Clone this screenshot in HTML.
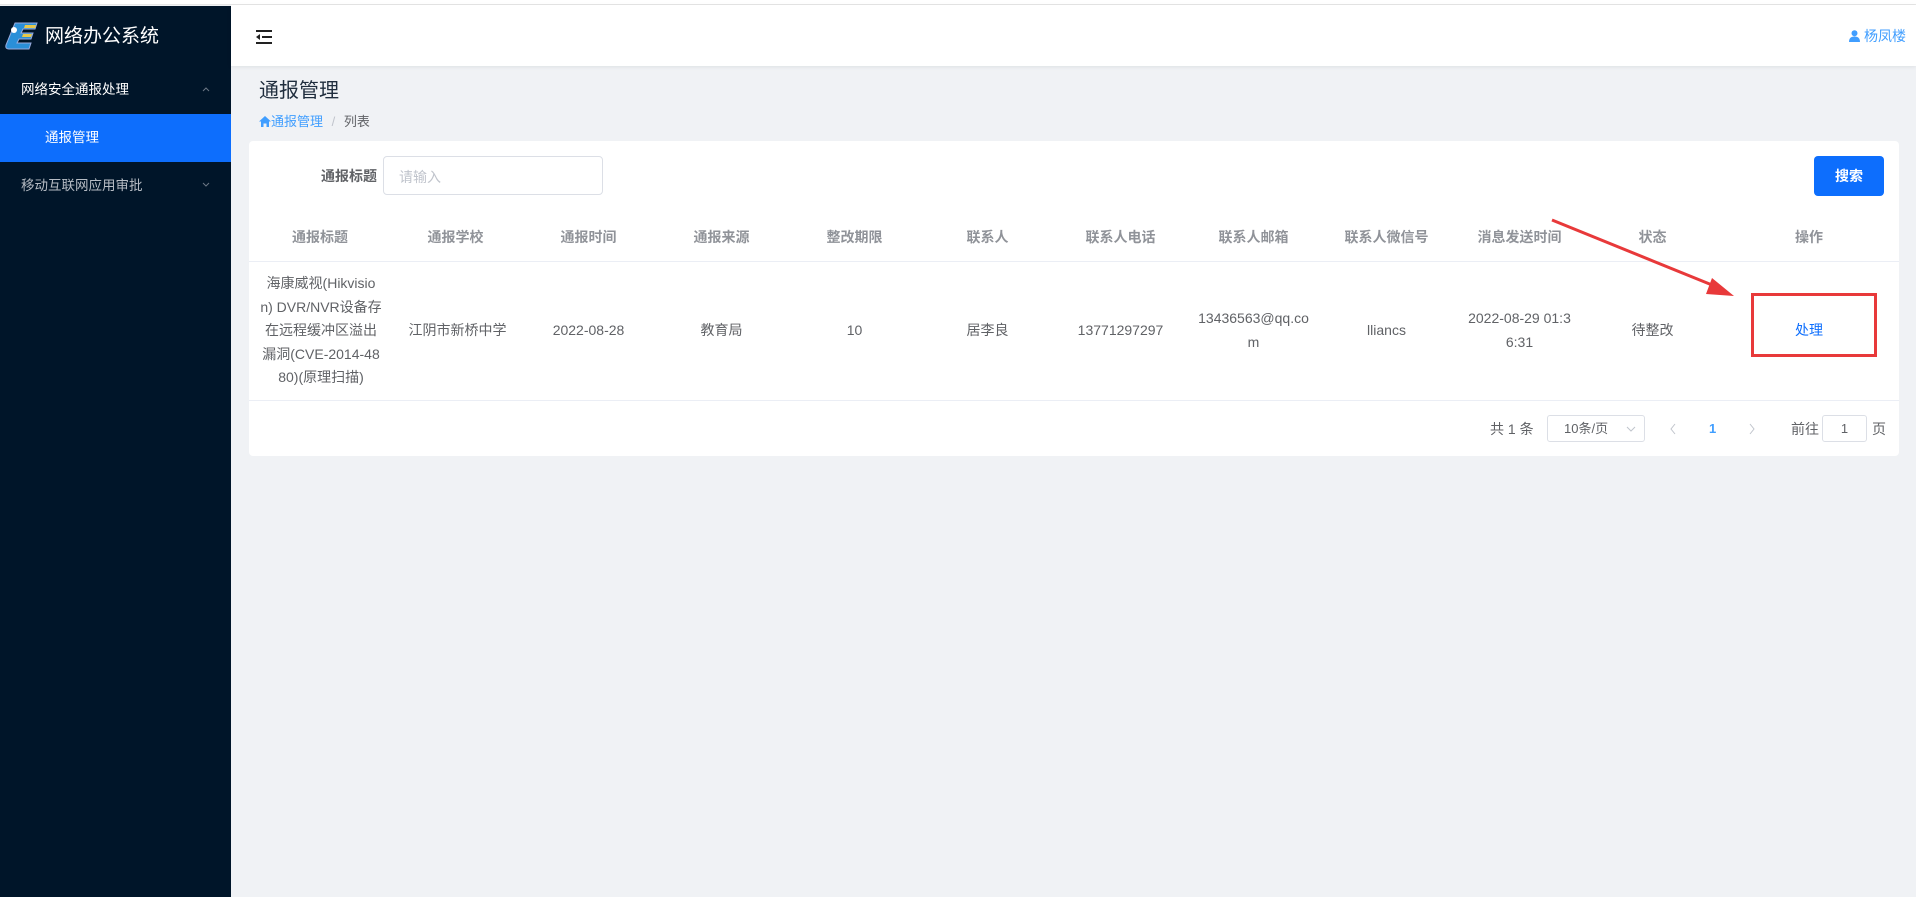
<!DOCTYPE html>
<html><head><meta charset="utf-8"><style>
*{margin:0;padding:0;box-sizing:border-box}
body{width:1916px;height:897px;overflow:hidden;background:#f0f2f5;font-family:"Liberation Sans","Noto Sans CJK SC",sans-serif;position:relative;color:#606266}
.abs{position:absolute}
.top{left:0;top:0;width:1916px;height:5px;background:#fff;border-bottom:1px solid #e6e6e6}
.side{left:0;top:6px;width:231px;height:891px;background:#001529}
.hdr{left:231px;top:5px;width:1685px;height:61px;background:#fff;box-shadow:0 1px 4px rgba(0,21,41,.08)}
.card{left:249px;top:141px;width:1650px;height:315px;background:#fff;border-radius:4px}
.th{top:227px;font-size:14px;font-weight:bold;color:#909399;text-align:center;line-height:20px}
.td{font-size:14px;color:#606266;text-align:center;line-height:23.5px;white-space:nowrap}
</style></head><body>
<div class="abs top"></div>
<div class="abs side">
  <svg class="abs" style="left:3px;top:15px" width="38" height="34" viewBox="0 0 38 34">
    <path d="M12 2 L34 2 L32 8 L20 8 L18 12 L30 12 L28 18 L16 18 L14 22 L28 22 L26 28 L6 28 Q2 28 3 24 Z" fill="#2a8fd8" stroke="#9ad" stroke-width="1"/>
    <path d="M22 4 L33 4 L32 7 L21 7Z M20 13 L29 13 L28 16 L19 16Z" fill="#e8c84a"/>
    <circle cx="11" cy="9" r="3" fill="#fff"/>
  </svg>
  <div class="abs" style="left:45px;top:19px;font-size:19px;color:#fff;line-height:24px">网络办公系统</div>
  <div class="abs" style="left:21px;top:74px;font-size:13.5px;color:#fff;line-height:20px">网络安全通报处理</div>
  <svg class="abs" style="left:200px;top:79px" width="12" height="10"><path d="M3 6 L6 3 L9 6" fill="none" stroke="#6b7785" stroke-width="1"/></svg>
  <div class="abs" style="left:0;top:108px;width:231px;height:48px;background:#0d6efd"></div>
  <div class="abs" style="left:45px;top:122px;font-size:13.5px;color:#fff;line-height:20px">通报管理</div>
  <div class="abs" style="left:21px;top:170px;font-size:13.5px;color:#b6bcc4;line-height:20px">移动互联网应用审批</div>
  <svg class="abs" style="left:200px;top:174px" width="12" height="10"><path d="M3 3 L6 6 L9 3" fill="none" stroke="#6b7785" stroke-width="1"/></svg>
</div>
<div class="abs hdr">
  <svg class="abs" style="left:23px;top:24px" width="20" height="16"><path d="M2 2H18M8 8H18M2 14H18" stroke="#222" stroke-width="2"/><path d="M6 5 L2 8 L6 11Z" fill="#222"/></svg>
  <div class="abs" style="right:10px;top:21px;font-size:14px;color:#409eff;line-height:20px"><svg width="11" height="12" viewBox="0 0 11 12" style="vertical-align:-1px"><circle cx="5.5" cy="3.2" r="3" fill="#409eff"/><path d="M0 12 Q0 6.5 5.5 6.5 Q11 6.5 11 12Z" fill="#409eff"/></svg> 杨凤楼</div>
</div>
<div class="abs" style="left:259px;top:79px;font-size:20px;color:#1f2d3d;line-height:24px">通报管理</div>
<div class="abs" style="left:259px;top:113px;font-size:13px;line-height:18px;color:#409eff"><svg width="12" height="11" viewBox="0 0 12 11" style="vertical-align:-1px"><path d="M6 0 L12 5.5 H10 V11 H7.5 V7.5 H4.5 V11 H2 V5.5 H0Z" fill="#409eff"/></svg>通报管理 <span style="color:#c0c4cc;margin:0 5px">/</span> <span style="color:#606266">列表</span></div>
<div class="abs card"></div>
<div class="abs" style="left:321px;top:166px;font-size:14px;font-weight:bold;color:#606266;line-height:20px">通报标题</div>
<div class="abs" style="left:383px;top:156px;width:220px;height:39px;border:1px solid #dcdfe6;border-radius:4px;background:#fff"><span class="abs" style="left:15px;top:10px;font-size:14px;color:#c0c4cc">请输入</span></div>
<div class="abs" style="left:1814px;top:156px;width:70px;height:40px;background:#0d6efd;border-radius:4px;color:#fff;font-size:14px;font-weight:bold;text-align:center;line-height:40px">搜索</div>

<div class="abs th" style="left:248px;width:144px">通报标题</div>
<div class="abs th" style="left:389px;width:133px">通报学校</div>
<div class="abs th" style="left:522px;width:133px">通报时间</div>
<div class="abs th" style="left:655px;width:133px">通报来源</div>
<div class="abs th" style="left:788px;width:133px">整改期限</div>
<div class="abs th" style="left:921px;width:133px">联系人</div>
<div class="abs th" style="left:1054px;width:133px">联系人电话</div>
<div class="abs th" style="left:1187px;width:133px">联系人邮箱</div>
<div class="abs th" style="left:1320px;width:133px">联系人微信号</div>
<div class="abs th" style="left:1453px;width:133px">消息发送时间</div>
<div class="abs th" style="left:1586px;width:133px">状态</div>
<div class="abs th" style="left:1721px;width:176px">操作</div>
<div class="abs" style="left:249px;top:261px;width:1650px;height:1px;background:#ebeef5"></div>
<div class="abs" style="left:249px;top:400px;width:1650px;height:1px;background:#ebeef5"></div>

<div class="abs td" style="left:249px;top:272px;width:144px">海康威视(Hikvisio<br>n) DVR/NVR设备存<br>在远程缓冲区溢出<br>漏洞(CVE-2014-48<br>80)(原理扫描)</div>
<div class="abs td" style="left:391px;top:319px;width:133px">江阴市新桥中学</div>
<div class="abs td" style="left:522px;top:319px;width:133px">2022-08-28</div>
<div class="abs td" style="left:655px;top:319px;width:133px">教育局</div>
<div class="abs td" style="left:788px;top:319px;width:133px">10</div>
<div class="abs td" style="left:921px;top:319px;width:133px">居李良</div>
<div class="abs td" style="left:1054px;top:319px;width:133px">13771297297</div>
<div class="abs td" style="left:1187px;top:307px;width:133px">13436563@qq.co<br>m</div>
<div class="abs td" style="left:1320px;top:319px;width:133px">lliancs</div>
<div class="abs td" style="left:1453px;top:307px;width:133px">2022-08-29 01:3<br>6:31</div>
<div class="abs td" style="left:1586px;top:319px;width:133px">待整改</div>
<div class="abs td" style="left:1721px;top:319px;width:176px;color:#0d6efd">处理</div>
<div class="abs" style="left:1751px;top:293px;width:126px;height:64px;border:3px solid #e8393a"></div>
<svg class="abs" style="left:0;top:0" width="1916" height="897"><path d="M1552 220 L1717 287" stroke="#e8393a" stroke-width="3"/><path d="M1734 296 L1712 278 L1706 294Z" fill="#e8393a"/></svg>

<div class="abs" style="left:1490px;top:419px;font-size:14px;line-height:20px">共 1 条</div>
<div class="abs" style="left:1547px;top:415px;width:98px;height:27px;border:1px solid #dcdfe6;border-radius:3px;font-size:13px;line-height:25px;padding-left:16px">10条/页<svg class="abs" style="right:8px;top:9px" width="10" height="8"><path d="M1 2 L5 6 L9 2" fill="none" stroke="#c0c4cc"/></svg></div>
<svg class="abs" style="left:1668px;top:422px" width="10" height="14"><path d="M7 2 L3 7 L7 12" fill="none" stroke="#c0c4cc"/></svg>
<div class="abs" style="left:1709px;top:419px;font-size:13px;color:#409eff;font-weight:bold;line-height:20px">1</div>
<svg class="abs" style="left:1747px;top:422px" width="10" height="14"><path d="M3 2 L7 7 L3 12" fill="none" stroke="#c0c4cc"/></svg>
<div class="abs" style="left:1791px;top:419px;font-size:14px;line-height:20px">前往</div>
<div class="abs" style="left:1822px;top:415px;width:45px;height:27px;border:1px solid #dcdfe6;border-radius:3px;font-size:13px;line-height:25px;text-align:center">1</div>
<div class="abs" style="left:1872px;top:419px;font-size:14px;line-height:20px">页</div>
</body></html>
